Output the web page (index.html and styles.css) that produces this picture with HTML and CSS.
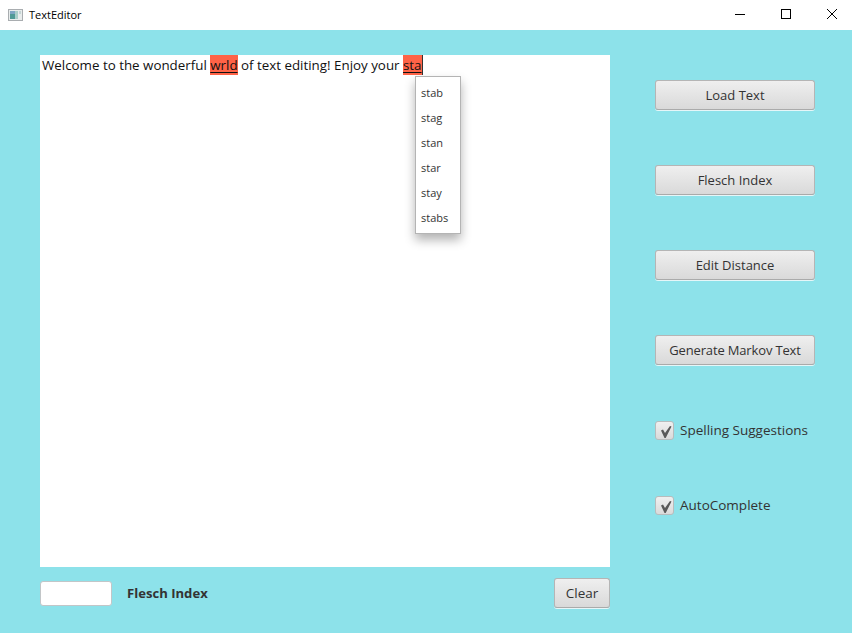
FILE: index.html
```html
<!DOCTYPE html>
<html lang="en">
<head>
<meta charset="utf-8">
<title>TextEditor</title>
<link rel="stylesheet" href="styles.css">
</head>
<body>
<div class="window">
  <header class="titlebar">
    <svg class="app-icon" width="16" height="16" viewBox="0 0 16 16">
      <rect x="0.5" y="2.5" width="14" height="11" fill="#e8ecec" stroke="#a9adb0"/>
      <rect x="2" y="4" width="5" height="8" fill="#4f9a96"/>
      <rect x="2" y="4" width="5" height="3" fill="#7fa6c4"/>
      <rect x="7" y="4" width="3" height="8" fill="#a9cfc9"/>
      <rect x="11" y="4" width="2" height="3" fill="#c5d5d5"/>
    </svg>
    <span class="title">TextEditor</span>
    <div class="winctrls">
      <button class="winbtn"><svg width="12" height="12" viewBox="0 0 12 12"><path d="M1 5.5H11" stroke="#000" fill="none"/></svg></button>
      <button class="winbtn"><svg width="12" height="12" viewBox="0 0 12 12"><rect x="1.5" y="0.5" width="9" height="9" stroke="#000" fill="none"/></svg></button>
      <button class="winbtn"><svg width="12" height="12" viewBox="0 0 12 12"><path d="M1 0L11 10M11 0L1 10" stroke="#000" fill="none"/></svg></button>
    </div>
  </header>
  <main class="content">
    <section class="left">
      <div class="editor">
        <div class="line">Welcome to the wonderful <span class="miss">wrld</span> of text editing! Enjoy your <span class="miss">sta</span><span class="caret"></span></div>
      </div>
      <div class="bottom">
        <div class="field"></div>
        <span class="flesch">Flesch Index</span>
        <button class="btn clear">Clear</button>
      </div>
    </section>
    <aside class="right">
      <button class="btn side">Load Text</button>
      <button class="btn side">Flesch Index</button>
      <button class="btn side">Edit Distance</button>
      <button class="btn side tight">Generate Markov Text</button>
      <label class="check"><span class="box"><svg width="17" height="17" viewBox="0 0 17 17"><path d="M5 8.5L7 7.5L9 11L14 4L15.5 4.5L9.7 16H8.5Z" fill="#595959"/></svg></span>Spelling Suggestions</label>
      <label class="check"><span class="box"><svg width="17" height="17" viewBox="0 0 17 17"><path d="M5 8.5L7 7.5L9 11L14 4L15.5 4.5L9.7 16H8.5Z" fill="#595959"/></svg></span>AutoComplete</label>
    </aside>
  </main>
  <ul class="popup">
    <li>stab</li>
    <li>stag</li>
    <li>stan</li>
    <li>star</li>
    <li>stay</li>
    <li>stabs</li>
  </ul>
</div>
</body>
</html>
```
FILE: styles.css
```css
* { box-sizing: border-box; }
html, body { margin: 0; padding: 0; }
body { font-family: "Open Sans", "Noto Sans", sans-serif; color: #333; }
.window { position: relative; width: 852px; height: 633px; overflow: hidden; background: #8de2ea; }
.titlebar { display: flex; align-items: center; height: 30px; background: #fff; padding-left: 8px; }
.app-icon { flex: none; }
.title { margin-left: 5px; margin-top: -1px; font-size: 11px; color: #000; }
.winctrls { display: flex; margin-left: auto; }
.winbtn { width: 46px; height: 30px; padding: 0 0 0 6px; border: 0; background: none; display: flex; align-items: center; justify-content: center; }
.content { display: flex; height: 603px; }
.left { width: 570px; margin: 25px 0 0 40px; }
.editor { height: 512px; background: #fff; padding: 0 2px; }
.line { font-size: 13.35px; line-height: 20px; color: #111; white-space: nowrap; }
.miss { background: #ff6347; display: inline-block; height: 20px; text-decoration: underline; text-underline-offset: 2px; }
.caret { display: inline-block; width: 1px; height: 20px; background: #333; vertical-align: top; }
.bottom { display: flex; align-items: center; height: 30px; margin-top: 11px; }
.field { width: 72px; height: 25px; background: #fff; border: 1px solid #c2c6c8; border-radius: 3px; }
.flesch { margin-left: 15px; font-size: 13.1px; font-weight: 700; color: #333; }
.btn { font-family: inherit; font-size: 13px; color: #333; height: 30px; padding: 0; border: 1px solid #b5b5b5; border-bottom-color: #aaa; border-radius: 3px; background: linear-gradient(#efefef, #d9d9d9); box-shadow: 0 1px 0 #e6f6f8; }
.tight { letter-spacing: -0.15px; }
.clear { width: 56px; margin-left: auto; font-size: 13.5px; }
.right { display: flex; flex-direction: column; align-items: flex-start; margin: 50px 0 0 45px; }
.side { width: 160px; margin-bottom: 55px; }
.check { display: flex; align-items: center; gap: 6px; height: 20px; font-size: 13.5px; color: #333; margin-bottom: 55px; }
.box { display: flex; width: 19px; height: 19px; border: 1px solid #b8bcbd; border-radius: 3px; background: linear-gradient(#f0f0f0, #dadada); }
.popup { position: absolute; left: 415px; top: 76px; width: 46px; height: 158px; margin: 0; padding: 3px 0 0; list-style: none; background: #fff; border: 1px solid #b4b4b4; box-shadow: 0 6px 10px rgba(0,0,0,.3); font-size: 11px; color: #333; }
.popup li { height: 25px; line-height: 25px; padding-left: 5px; }
```
